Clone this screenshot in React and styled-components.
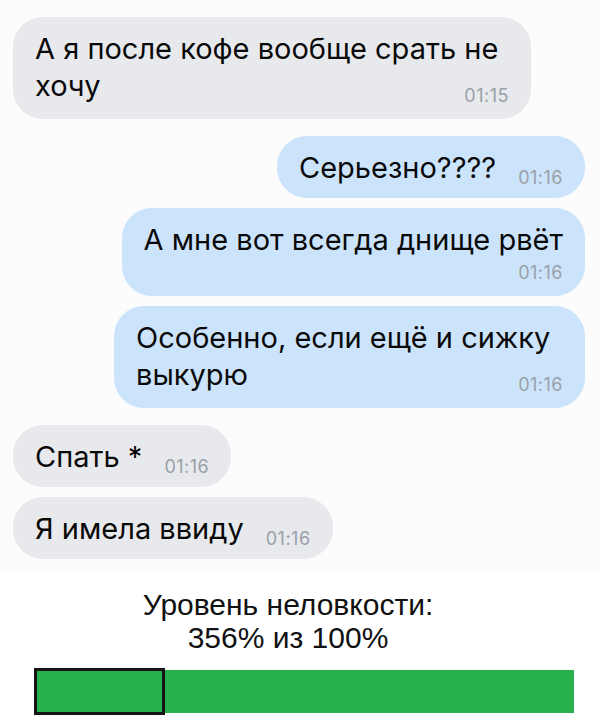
import React from "react";
import styled, { createGlobalStyle, css } from "styled-components";

const Global = createGlobalStyle`
  html, body { margin: 0; padding: 0; background: #ffffff; }
  body { width: 600px; height: 722px; overflow: hidden; }
`;

const Page = styled.div`
  width: 600px;
  height: 722px;
  display: flex;
  flex-direction: column;
  background: #ffffff;
`;

const Chat = styled.div`
  display: flex;
  flex-direction: column;
  gap: 17px;
  padding: 17px 15px 13px 13px;
  background: #fcfcfd;
`;

const Group = styled.div`
  display: flex;
  flex-direction: column;
  gap: 10px;
  align-items: ${(p) => (p.$out ? "flex-end" : "flex-start")};
`;

const Bubble = styled.div`
  display: flow-root;
  box-sizing: border-box;
  width: fit-content;
  max-width: ${(p) => (p.$out ? "471px" : "518px")};
  padding: 13px 22px 12px 22px;
  border-radius: 30px;
  background: ${(p) => (p.$out ? "#cce4fb" : "#e8e9ec")};
  color: #0a0a0a;
  font-family: Inter, "Noto Sans", sans-serif;
  font-size: 29px;
  line-height: 37px;
  letter-spacing: 0;
`;

const Time = styled.span`
  font-family: Inter, "Noto Sans", sans-serif;
  font-size: 18px;
  letter-spacing: 0.5px;
  color: #99a0a8;
  white-space: nowrap;
  ${(p) =>
    p.$mode === "inline" &&
    css`
      display: inline-block;
      margin-left: 22px;
      line-height: 12px;
      vertical-align: -6px;
    `}
  ${(p) =>
    p.$mode === "float" &&
    css`
      float: right;
      line-height: 18px;
      margin: 20px 0 2px 12px;
    `}
  ${(p) =>
    p.$mode === "block" &&
    css`
      display: block;
      text-align: right;
      line-height: 18px;
      margin: 6px 0 2px 0;
    `}
`;

const Footer = styled.div`
  display: flex;
  flex-direction: column;
  padding: 16px 26px 0 34px;
`;

const Caption = styled.div`
  font-family: "Liberation Sans", Arial, sans-serif;
  font-size: 30px;
  line-height: 33px;
  color: #111111;
  text-align: center;
  padding-right: 24px;
  margin-left: -34px;
  margin-right: -26px;
`;

const Track = styled.div`
  margin-top: 14px;
  height: 47px;
  display: flex;
  align-items: center;
`;

const FullBox = styled.div`
  box-sizing: border-box;
  width: 131px;
  height: 47px;
  border: 3px solid #151515;
  background: #28b04f;
`;

const Overflow = styled.div`
  flex: 1;
  height: 43px;
  background: #28b04f;
`;

const groups = [
  {
    out: false,
    items: [{ text: "А я после кофе вообще срать не хочу", time: "01:15", mode: "float" }],
  },
  {
    out: true,
    items: [
      { text: "Серьезно????", time: "01:16", mode: "inline" },
      { text: "А мне вот всегда днище рвёт", time: "01:16", mode: "block" },
      { text: "Особенно, если ещё и сижку выкурю", time: "01:16", mode: "float" },
    ],
  },
  {
    out: false,
    items: [
      { text: "Спать *", time: "01:16", mode: "inline" },
      { text: "Я имела ввиду", time: "01:16", mode: "inline" },
    ],
  },
];

export default function App() {
  return (
    <>
      <Global />
      <Page>
        <Chat>
          {groups.map((g, gi) => (
            <Group key={gi} $out={g.out}>
              {g.items.map((m, mi) => (
                <Bubble key={mi} $out={g.out}>
                  {m.text}
                  <Time $mode={m.mode}>{m.time}</Time>
                </Bubble>
              ))}
            </Group>
          ))}
        </Chat>
        <Footer>
          <Caption>
            Уровень неловкости:
            <br />
            356% из 100%
          </Caption>
          <Track>
            <FullBox />
            <Overflow />
          </Track>
        </Footer>
      </Page>
    </>
  );
}
